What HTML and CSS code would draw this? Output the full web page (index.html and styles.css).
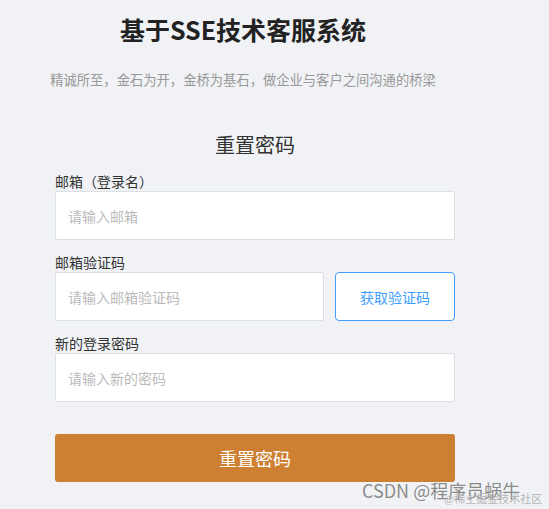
FILE: index.html
```html
<!DOCTYPE html>
<html lang="zh">
<head>
<meta charset="utf-8">
<link rel="stylesheet" href="styles.css">
</head>
<body>
<div class="page">
  <header class="header">
    <h1 class="title">基于SSE技术客服系统</h1>
    <p class="subtitle">精诚所至，金石为开，金桥为基石，做企业与客户之间沟通的桥梁</p>
  </header>
  <form class="form">
    <h2 class="form-title">重置密码</h2>
    <label class="label">邮箱（登录名）</label>
    <input class="input" type="text" placeholder="请输入邮箱">
    <label class="label">邮箱验证码</label>
    <div class="row">
      <input class="input input-code" type="text" placeholder="请输入邮箱验证码">
      <button class="btn-code" type="button">获取验证码</button>
    </div>
    <label class="label">新的登录密码</label>
    <input class="input" type="password" placeholder="请输入新的密码">
    <button class="btn-submit" type="button">重置密码</button>
  </form>
  <div class="watermark">
    <span class="wm-main">CSDN @程序员蜗牛</span>
    <span class="wm-sub">@稀土掘金技术社区</span>
  </div>
</div>
</body>
</html>
```
FILE: styles.css
```css
html, body {
  margin: 0;
  padding: 0;
  background: #f0f2f5;
  font-family: "Microsoft YaHei", "Noto Sans CJK SC", "Liberation Sans", sans-serif;
}
.page {
  position: relative;
  width: 549px;
  height: 509px;
  overflow: hidden;
}
.header {
  width: 486px;
  padding-top: 11px;
  text-align: center;
}
.title {
  margin: 0;
  font-size: 25px;
  line-height: 36px;
  font-weight: 700;
  color: #222;
}
.subtitle {
  margin: 23px 0 0;
  font-size: 13.3px;
  line-height: 20px;
  color: #999;
}
.form {
  width: 400px;
  margin: 41px 0 0 55px;
  display: flex;
  flex-direction: column;
}
.form-title {
  margin: 0 0 12px;
  font-size: 20px;
  line-height: 28px;
  font-weight: 400;
  color: #333;
  text-align: center;
}
.label {
  font-size: 14px;
  line-height: 20px;
  color: #333;
}
.input {
  box-sizing: border-box;
  height: 49px;
  width: 100%;
  margin: 0 0 12px;
  padding: 0 12px;
  border: 1px solid #dcdfe6;
  border-radius: 2px;
  background: #fff;
  font-family: inherit;
  font-size: 14px;
  color: #333;
  outline: none;
}
.input::placeholder {
  color: #bbb;
}
.row {
  display: flex;
  gap: 11px;
  margin-bottom: 12px;
}
.row .input {
  margin: 0;
}
.input-code {
  width: 269px;
  flex: none;
}
.btn-code {
  box-sizing: border-box;
  flex: 1;
  height: 49px;
  border: 1px solid #409eff;
  border-radius: 4px;
  background: #fff;
  color: #409eff;
  font-family: inherit;
  font-size: 14px;
  padding: 0;
}
.btn-submit {
  box-sizing: border-box;
  margin-top: 20px;
  height: 48px;
  width: 100%;
  border: none;
  border-radius: 3px;
  background: #cd7f32;
  color: #fff;
  font-family: inherit;
  font-size: 18px;
}
.watermark {
  position: absolute;
  left: 362px;
  top: 477px;
  width: 187px;
  height: 32px;
}
.wm-main {
  position: absolute;
  left: 0;
  top: 0;
  font-size: 18px;
  line-height: 26px;
  color: #8a8a8a;
  white-space: nowrap;
  text-shadow: 0 0 1px #fff;
}
.wm-sub {
  position: absolute;
  left: 82px;
  top: 15px;
  font-family: "Liberation Serif", "Noto Sans CJK SC", serif;
  font-size: 11px;
  line-height: 14px;
  color: #b5b5b5;
  white-space: nowrap;
}
```
